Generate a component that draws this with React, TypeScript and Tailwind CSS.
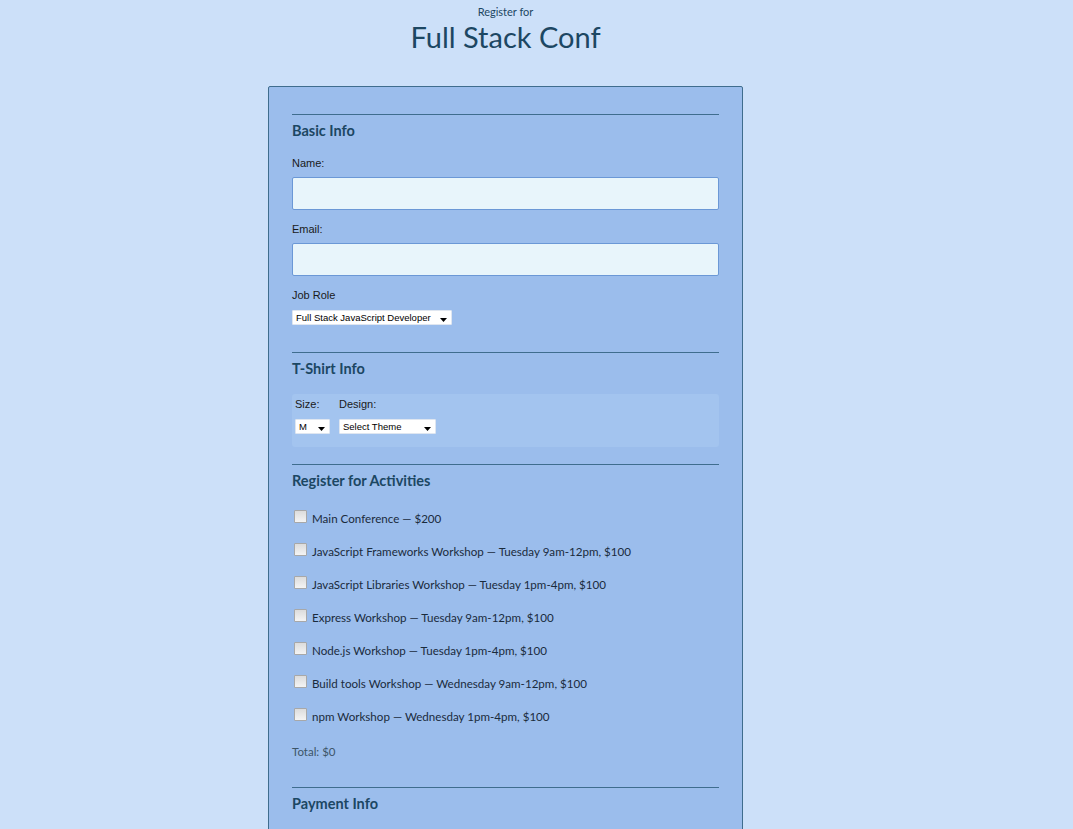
import React from 'react';

const activities = [
  'Main Conference — $200',
  'JavaScript Frameworks Workshop — Tuesday 9am-12pm, $100',
  'JavaScript Libraries Workshop — Tuesday 1pm-4pm, $100',
  'Express Workshop — Tuesday 9am-12pm, $100',
  'Node.js Workshop — Tuesday 1pm-4pm, $100',
  'Build tools Workshop — Wednesday 9am-12pm, $100',
  'npm Workshop — Wednesday 1pm-4pm, $100',
];

const Arrow = () => (
  <svg width="7" height="4" viewBox="0 0 7 4" className="mt-[5px]">
    <path d="M0 0h7L3.5 4z" fill="#000" />
  </svg>
);

const FakeSelect = ({ label, width }: { label: string; width: string }) => (
  <div
    className={`${width} h-[15px] bg-white border border-[#dfe6f0] rounded-[1px] flex items-center justify-between pl-[3px] pr-[4px] text-[9.5px] leading-none text-black font-['Liberation_Sans',Arial,sans-serif]`}
  >
    <span>{label}</span>
    <Arrow />
  </div>
);

const Heading = ({ children }: { children: React.ReactNode }) => (
  <>
    <hr className="border-0 border-t border-[#3f6d8e]" />
    <h2 className="mt-[7px] text-[14.5px] leading-[18px] font-bold text-[#1c4763] font-['Lato',sans-serif]">
      {children}
    </h2>
  </>
);

export default function App() {
  return (
    <div className="min-h-screen bg-[#cce0f9] pb-10 pr-[62px]">
      <header className="text-center text-[#1c4763] font-['Lato',sans-serif]">
        <p className="pt-[5px] text-[11px] leading-[14px]">Register for</p>
        <h1 className="text-[29px] leading-[34px] mt-[1px]">Full Stack Conf</h1>
      </header>

      <form className="mx-auto mt-[32px] w-[475px] bg-[#9bbdec] border border-[#3f6d8e] rounded-[2px] px-[23px] pt-[27px] pb-10">
        <Heading>Basic Info</Heading>

        <div className="font-['Liberation_Sans',Arial,sans-serif] text-[11px] leading-[14px] text-[#1a1a1a]">
          <label className="block mt-[16px]">Name:</label>
          <div className="mt-[7px] h-[33px] bg-[#e8f5fb] border border-[#6b98d6] rounded-[2px]" />
          <label className="block mt-[12px]">Email:</label>
          <div className="mt-[7px] h-[33px] bg-[#e8f5fb] border border-[#6b98d6] rounded-[2px]" />
          <label className="block mt-[12px]">Job Role</label>
          <div className="mt-[8px]">
            <FakeSelect label="Full Stack JavaScript Developer" width="w-[160px]" />
          </div>
        </div>

        <div className="mt-[27px]">
          <Heading>T-Shirt Info</Heading>
        </div>

        <div className="mt-[16px] h-[53px] bg-[#a3c4ef] rounded-[3px] px-[3px] pt-[3px] flex gap-[9px] font-['Liberation_Sans',Arial,sans-serif] text-[11px] leading-[14px] text-[#1a1a1a]">
          <div>
            <p>Size:</p>
            <div className="mt-[8px]">
              <FakeSelect label="M" width="w-[35px]" />
            </div>
          </div>
          <div>
            <p>Design:</p>
            <div className="mt-[8px]">
              <FakeSelect label="Select Theme" width="w-[97px]" />
            </div>
          </div>
        </div>

        <div className="mt-[17px]">
          <Heading>Register for Activities</Heading>
        </div>

        <div className="mt-[19px] flex flex-col gap-[14px] font-['Lato',sans-serif] text-[11.6px] leading-[18px] text-[#1a2b3c]">
          {activities.map((a) => (
            <label key={a} className="flex items-start gap-[5px] pl-[2px]">
              <span className="mt-[1px] w-[13px] h-[13px] shrink-0 border border-[#a8a8a8] bg-gradient-to-b from-[#dcdcdc] to-[#f4f4f4] rounded-[1px]" />
              <span className="mt-[1px]">{a}</span>
            </label>
          ))}
        </div>

        <p className="mt-[19px] text-[11.5px] leading-[14px] text-[#3d5568] font-['Lato',sans-serif]">Total: $0</p>

        <div className="mt-[28px]">
          <Heading>Payment Info</Heading>
        </div>
      </form>
    </div>
  );
}
